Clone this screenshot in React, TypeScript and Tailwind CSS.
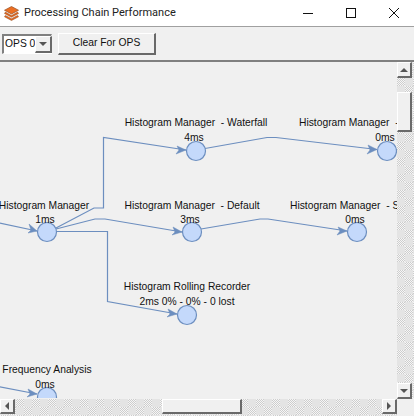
import { ReactNode } from "react";

const UI_FONT = "font-['Liberation_Sans',Arial,sans-serif]";

// the scaled-down checker of the scrollbar tracks
const TRACK =
  "bg-[repeating-conic-gradient(#e4e4e4_0_25%,transparent_0_50%),repeating-conic-gradient(#cdcdcd_0_25%,#f6f6f6_0_50%)] bg-[length:16px_16px,2px_2px]";

// bevelled win95 style button, the arrows and thumbs all use it
function Bevel({ className, children }: { className: string; children?: ReactNode }) {
  return (
    <div className={"flex items-center justify-center bg-[#f0f0f0] border-t border-l border-t-white border-l-white border-r-2 border-b-2 border-r-[#696969] border-b-[#696969] " + className}>
      {children}
    </div>
  );
}

function Label({ x, y, w = 200, left, children }: { x: number; y: number; w?: number; left?: boolean; children: ReactNode }) {
  return (
    <div
      className={"absolute whitespace-pre text-[10.3px] leading-[14px] text-[#111] " + (left ? "text-left" : "text-center")}
      style={{ left: x, top: y, width: w }}
    >
      {children}
    </div>
  );
}

const nodes = [
  [47, 232],
  [196, 151],
  [192, 232],
  [187, 315],
  [47, 397],
  [387, 151],
  [357, 232],
];

const edges = [
  "M-5 222 L37 231",
  "M56 228 L94 208 L103.5 208 L103.5 137.5 L186 150",
  "M56 229 L95 219 L105 219 L182 232",
  "M56 231.5 L107.5 231.5 L107.5 301.5 L177 314",
  "M205 148.5 L267 137.5 L276 137.5 L377 149.5",
  "M201 229 L260 219 L268 219 L347 231",
  "M-5 386 L37 394",
];

const arrows = [
  "M37 231 L29 224 L31 230 L28 233 Z",
  "M186 150 L177 146 L179 150 L176 154 Z",
  "M182 232 L173 227 L175 232 L172 235 Z",
  "M177 314 L168 309 L170 314 L167 317 Z",
  "M377 149.5 L368 145 L370 150 L367 154 Z",
  "M347 231 L338 227 L340 231 L337 235 Z",
  "M37 394 L28 389 L30 394 L27 397 Z",
];

export default function App() {
  return (
    <div className={"flex flex-col w-[414px] h-[416px] overflow-hidden bg-[#f0f0f0] " + UI_FONT}>
      {/* title bar */}
      <div className="flex items-center h-[26px] bg-white border-b border-b-[#a0a0a0] box-content shrink-0">
        <svg width="15" height="15" viewBox="0 0 16 16" className="ml-[4px]">
          <path d="M8 0.5 L15.5 4.5 L8 8.5 L0.5 4.5 Z" fill="#ec6f22" stroke="#8f4a1e" strokeWidth="0.7" />
          <path d="M1.5 6.5 L8 10 L14.5 6.5 L15.5 8 L8 12 L0.5 8 Z" fill="#e2651d" stroke="#8f4a1e" strokeWidth="0.5" />
          <path d="M1.5 10 L8 13.5 L14.5 10 L15.5 11.5 L8 15.5 L0.5 11.5 Z" fill="#e2651d" stroke="#8f4a1e" strokeWidth="0.5" />
        </svg>
        <span className="ml-[5px] text-[11px] text-[#222] font-['Roboto',sans-serif]">Processing Chain Performance</span>
        <div className="flex ml-auto -mr-px">
          <div className="flex items-center justify-center w-[43px] h-[26px]">
            <div className="w-[10px] h-px bg-[#111]" />
          </div>
          <div className="flex items-center justify-center w-[43px] h-[26px]">
            <div className="w-[10px] h-[10px] border border-[#111]" />
          </div>
          <div className="flex items-center justify-center w-[43px] h-[26px]">
            <svg width="10" height="10" viewBox="0 0 10 10">
              <path d="M0 0 L10 10 M10 0 L0 10" stroke="#111" strokeWidth="1" fill="none" />
            </svg>
          </div>
        </div>
      </div>

      {/* toolbar */}
      <div className="flex items-center h-[33px] shrink-0 pl-[2px] gap-[6px] text-[10.3px] text-[#111]">
        <div className="flex items-center w-[50px] h-[20px] border-t-2 border-l-2 border-t-[#808080] border-l-[#808080] border-b border-r border-b-white border-r-white bg-white">
          <span className="pl-px flex-1 whitespace-nowrap">OPS 0</span>
          <Bevel className="w-[17px] h-[17px] shrink-0">
            <div className="w-0 h-0 border-l-[4px] border-r-[4px] border-t-[4px] border-l-transparent border-r-transparent border-t-[#555]" />
          </Bevel>
        </div>
        <Bevel className="w-[98px] h-[22px]">Clear For OPS</Bevel>
      </div>

      {/* graph area */}
      <div className="flex flex-col flex-1 min-h-0 border-t-2 border-t-[#808080]">
        <div className="flex flex-1 min-h-0">
          <div className="relative flex-1 overflow-hidden">
            <svg width="397" height="337" viewBox="0 61 397 337" className="absolute left-0 top-[-1px]">
              {edges.map((d) => (
                <path key={d} d={d} fill="none" stroke="#6c8ebf" strokeWidth="1.2" />
              ))}
              {arrows.map((d) => (
                <path key={d} d={d} fill="#6c8ebf" stroke="#6c8ebf" strokeWidth="0.5" />
              ))}
              {nodes.map(([cx, cy]) => (
                <circle key={cx + "-" + cy} cx={cx} cy={cy} r="9.5" fill="#c4d9fb" stroke="#6c8ebf" strokeWidth="1.2" />
              ))}
            </svg>
            <Label x={96} y={54}>Histogram Manager  - Waterfall</Label>
            <Label x={94} y={69}>4ms</Label>
            <Label x={299} y={54} left>Histogram Manager  - S</Label>
            <Label x={285} y={69}>0ms</Label>
            <Label x={-56} y={137}>Histogram Manager</Label>
            <Label x={-55} y={151}>1ms</Label>
            <Label x={92} y={137}>Histogram Manager  - Default</Label>
            <Label x={290} y={137} left>Histogram Manager  - S</Label>
            <Label x={90} y={151}>3ms</Label>
            <Label x={255} y={151}>0ms</Label>
            <Label x={87} y={218}>Histogram Rolling Recorder</Label>
            <Label x={87} y={233}>2ms 0% - 0% - 0 lost</Label>
            <Label x={-53} y={301}>Frequency Analysis</Label>
            <Label x={-55} y={316}>0ms</Label>
          </div>

          {/* vertical scrollbar */}
          <div className={"flex flex-col w-[17px] shrink-0 " + TRACK}>
            <Bevel className="h-[16px] shrink-0 mr-[2px]">
              <div className="w-0 h-0 border-l-[4px] border-r-[4px] border-b-[4px] border-l-transparent border-r-transparent border-b-[#555]" />
            </Bevel>
            <Bevel className="h-[40px] shrink-0 mt-[14px] mr-[2px]" />
            <Bevel className="h-[16px] shrink-0 mt-auto mr-[2px]">
              <div className="w-0 h-0 border-l-[4px] border-r-[4px] border-t-[4px] border-l-transparent border-r-transparent border-t-[#555]" />
            </Bevel>
          </div>
        </div>

        {/* horizontal scrollbar */}
        <div className="flex h-[17px] shrink-0">
          <div className={"flex flex-1 " + TRACK}>
            <Bevel className="w-[15px] shrink-0 mb-[2px]">
              <div className="w-0 h-0 border-t-[4px] border-b-[4px] border-r-[4px] border-t-transparent border-b-transparent border-r-[#555]" />
            </Bevel>
            <Bevel className="w-[80px] shrink-0 ml-[147px] mb-[2px]" />
            <Bevel className="w-[15px] shrink-0 ml-auto mb-[2px]">
              <div className="w-0 h-0 border-t-[4px] border-b-[4px] border-l-[4px] border-t-transparent border-b-transparent border-l-[#555]" />
            </Bevel>
          </div>
          <div className="w-[17px] shrink-0 bg-[#f0f0f0]" />
        </div>
      </div>
    </div>
  );
}
